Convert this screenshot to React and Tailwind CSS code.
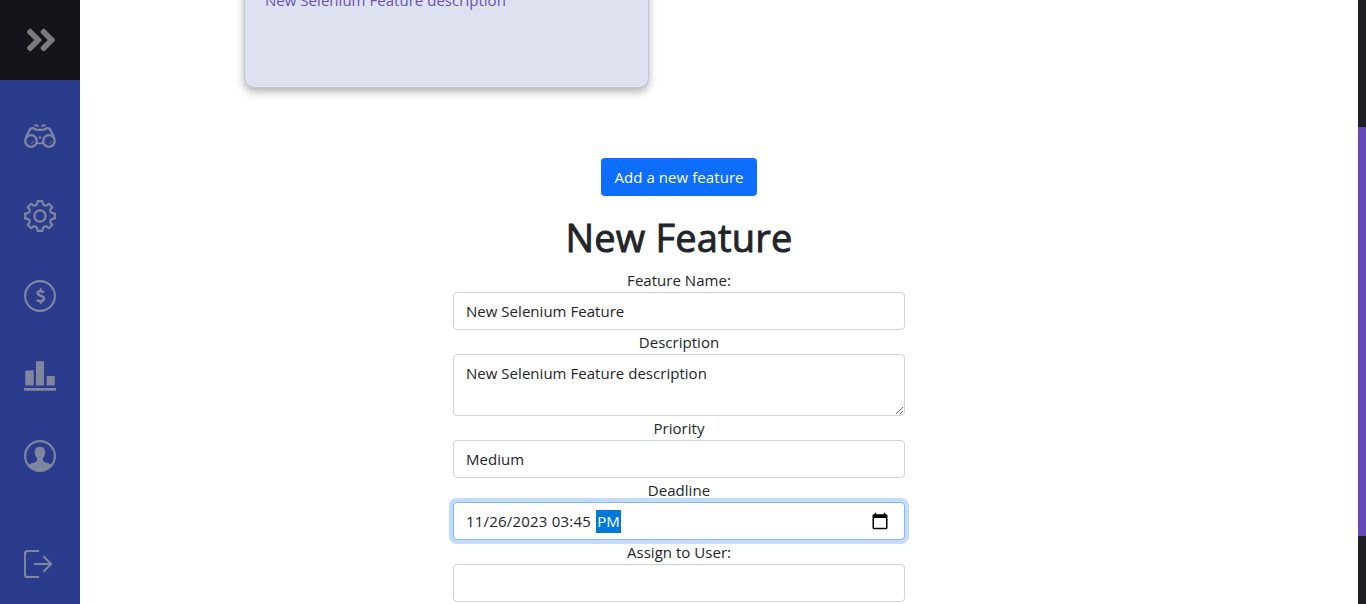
import React from "react";
import { FaAngleDoubleRight } from "react-icons/fa";

function Binoculars() {
  return (
    <svg viewBox="0 0 32 32" className="h-8 w-8" fill="none" stroke="currentColor" strokeWidth="2.2" strokeLinejoin="round" strokeLinecap="round">
      <circle cx="7" cy="21" r="5.8" />
      <circle cx="25" cy="21" r="5.8" />
      <path d="M1.8 18 5.6 10Q7 7.4 9.8 8.4Q11.6 9.8 13.4 9.8H18.6Q20.4 9.8 22.2 8.4Q25 7.4 26.4 10L30.2 18" strokeWidth="2.2" />
      <path d="M12.8 22.8Q16 24.2 19.2 22.8" strokeWidth="2" />
      <path d="M11 5.4Q12.6 4.8 13.8 6M21 5.4Q19.4 4.8 18.2 6" strokeWidth="2" />
      <path d="M9.2 21.6Q8.8 22.8 7.6 23.4M27.4 21.6Q27 22.8 25.8 23.4" strokeWidth="1" />
      <circle cx="16" cy="17.5" r="1.3" fill="currentColor" stroke="none" />
    </svg>
  );
}

function Gear() {
  return (
    <svg viewBox="0 0 32 32" className="h-8 w-8" fill="none" stroke="currentColor" strokeWidth="2.2" strokeLinejoin="round">
      <path d="M13.6 1.1H18.4L18.8 3.4C19.2 5.6 21.4 6.4 23 5.2L24.8 3.8 28.2 7.2 26.8 9C25.6 10.6 26.4 12.8 28.6 13.2L30.9 13.6V18.4L28.6 18.8C26.4 19.2 25.6 21.4 26.8 23L28.2 24.8 24.8 28.2 23 26.8C21.4 25.6 19.2 26.4 18.8 28.6L18.4 30.9H13.6L13.2 28.6C12.8 26.4 10.6 25.6 9 26.8L7.2 28.2 3.8 24.8 5.2 23C6.4 21.4 5.6 19.2 3.4 18.8L1.1 18.4V13.6L3.4 13.2C5.6 12.8 6.4 10.6 5.2 9L3.8 7.2 7.2 3.8 9 5.2C10.6 6.4 12.8 5.6 13.2 3.4Z" />
      <circle cx="16" cy="16" r="5.6" />
    </svg>
  );
}

function Coin() {
  return (
    <svg viewBox="0 0 32 32" className="h-8 w-8" fill="none" stroke="currentColor" strokeWidth="2.1">
      <circle cx="16" cy="16" r="14.9" />
      <path d="M20 12.2Q18.6 11.2 16.8 11.2C14.6 11.2 13.6 12.2 13.6 13.3C13.6 16.3 20 15.1 20 18.7C20 20.2 18.6 21.1 16.5 21.1Q14.4 21.1 12.6 20" strokeWidth="2.5" />
      <path d="M16.7 8.2V11M16.7 21V23.8" strokeWidth="2" />
    </svg>
  );
}

function Bars() {
  return (
    <svg viewBox="0 0 32 32" className="h-8 w-8" fill="currentColor">
      <path d="M1.3 10.5H9.7V25.6H1.3ZM12 1.2H20V25.6H12ZM22.6 16H30.8V25.6H22.6ZM0 28H32V30.8H0Z" />
    </svg>
  );
}

function Person() {
  return (
    <svg viewBox="0 0 32 32" className="h-8 w-8" fill="currentColor">
      <circle cx="16" cy="16" r="14.9" fill="none" stroke="currentColor" strokeWidth="2.1" />
      <path d="M16 6.7C12.8 6.7 10.8 8.8 10.8 12C10.8 14.3 11.5 16.4 12.8 17.8C13.5 21.2 12.6 21.8 10.4 22.4C7.8 23.1 5.8 23.6 4.6 25.2A15 15 0 0 0 27.4 25.2C26.2 23.6 24.2 23.1 21.6 22.4C19.4 21.8 18.5 21.2 19.2 17.8C20.5 16.4 21.2 14.3 21.2 12C21.2 8.8 19.2 6.7 16 6.7Z" />
    </svg>
  );
}

function Exit() {
  return (
    <svg viewBox="0 0 32 32" className="h-8 w-8" fill="none" stroke="currentColor" strokeWidth="2" strokeLinejoin="round">
      <path d="M15 3H3.6Q1 3 1 5.6V26.4Q1 29 3.6 29H15" />
      <path d="M10 16H27M19.3 8.3 27.2 16 19.3 23.7" />
    </svg>
  );
}

const navItems = [Binoculars, Gear, Coin, Bars, Person];
const field = "h-[38px] w-full rounded border border-[#ced4da] bg-white px-3 flex items-center";

function Label({ children }) {
  return <label className="flex h-6 items-center justify-center">{children}</label>;
}

function CalendarIcon() {
  return (
    <svg viewBox="0 0 24 24" className="h-[18px] w-[18px]" fill="black">
      <path d="M20 3h-1V1h-2v2H7V1H5v2H4c-1.1 0-2 .9-2 2v16c0 1.1.9 2 2 2h16c1.1 0 2-.9 2-2V5c0-1.1-.9-2-2-2zm0 18H4V8h16v13z" />
    </svg>
  );
}

export default function App() {
  return (
    <div className="flex h-[604px] w-full overflow-hidden bg-white font-['Open_Sans',sans-serif] text-[15px] leading-6 tracking-[0.03px] text-[#212529]">
      <nav className="flex w-20 shrink-0 flex-col bg-[#2c3c8c] text-[#8085a0]">
        <div className="flex h-20 items-center justify-center bg-[#15141a] pl-px text-[#7b7b7b]">
          <FaAngleDoubleRight className="h-9 w-8" />
        </div>
        <div className="flex flex-col pt-4">
          {navItems.map((Icon, i) => (
            <a key={i} className="flex h-20 items-center justify-center">
              <Icon />
            </a>
          ))}
        </div>
        <a className="mt-auto flex h-20 items-center justify-center">
          <Exit />
        </a>
      </nav>

      <main className="flex min-w-0 flex-1 flex-col items-center pr-20">
        <section className="-mt-3 ml-[164px] h-[100px] w-[405px] shrink-0 self-start rounded-b-[10px] border border-t-0 border-[#c4c5d3] bg-[#dee2f0] px-5 text-[#6a4fbb] shadow-[0_4px_8px_rgba(0,0,0,0.3)]">
          <p>New Selenium Feature description</p>
        </section>

        <button className="mt-[70px] h-[38px] w-[156px] shrink-0 rounded bg-[#0d6efd] tracking-[0.07px] text-white">Add a new feature</button>

        <form className="mt-4 w-[452px]">
          <h1 className="mb-2 flex h-12 items-center justify-center pt-0.5 text-[38px] font-normal tracking-[0.2px] [-webkit-text-stroke:0.9px_#212529]">New Feature</h1>
          <Label>Feature Name:</Label>
          <div className={field}>New Selenium Feature</div>
          <Label>Description</Label>
          <textarea
            className="block h-[62px] w-full rounded border border-[#ced4da] px-3 py-1.5"
            defaultValue="New Selenium Feature description"
          />
          <Label>Priority</Label>
          <div className={field}>Medium</div>
          <Label>Deadline</Label>
          <div className="flex h-[38px] w-full items-center rounded border border-[#86b7fe] bg-white px-3 shadow-[0_0_0_4px_#c2dbfe]">
            <span className="tracking-[0.2px]">11/26/2023 03:45</span>
            <span className="ml-[5px] w-[25px] bg-[#0078d7] text-center leading-[23px] text-white">PM</span>
            <span className="mr-[3px] ml-auto">
              <CalendarIcon />
            </span>
          </div>
          <Label>Assign to User:</Label>
          <div className={field} />
        </form>
      </main>

      <aside className="flex w-2 shrink-0 flex-col bg-[#1e1e24] pt-[127px]">
        <div className="h-[409px] bg-[#6549b6]" />
      </aside>
    </div>
  );
}
